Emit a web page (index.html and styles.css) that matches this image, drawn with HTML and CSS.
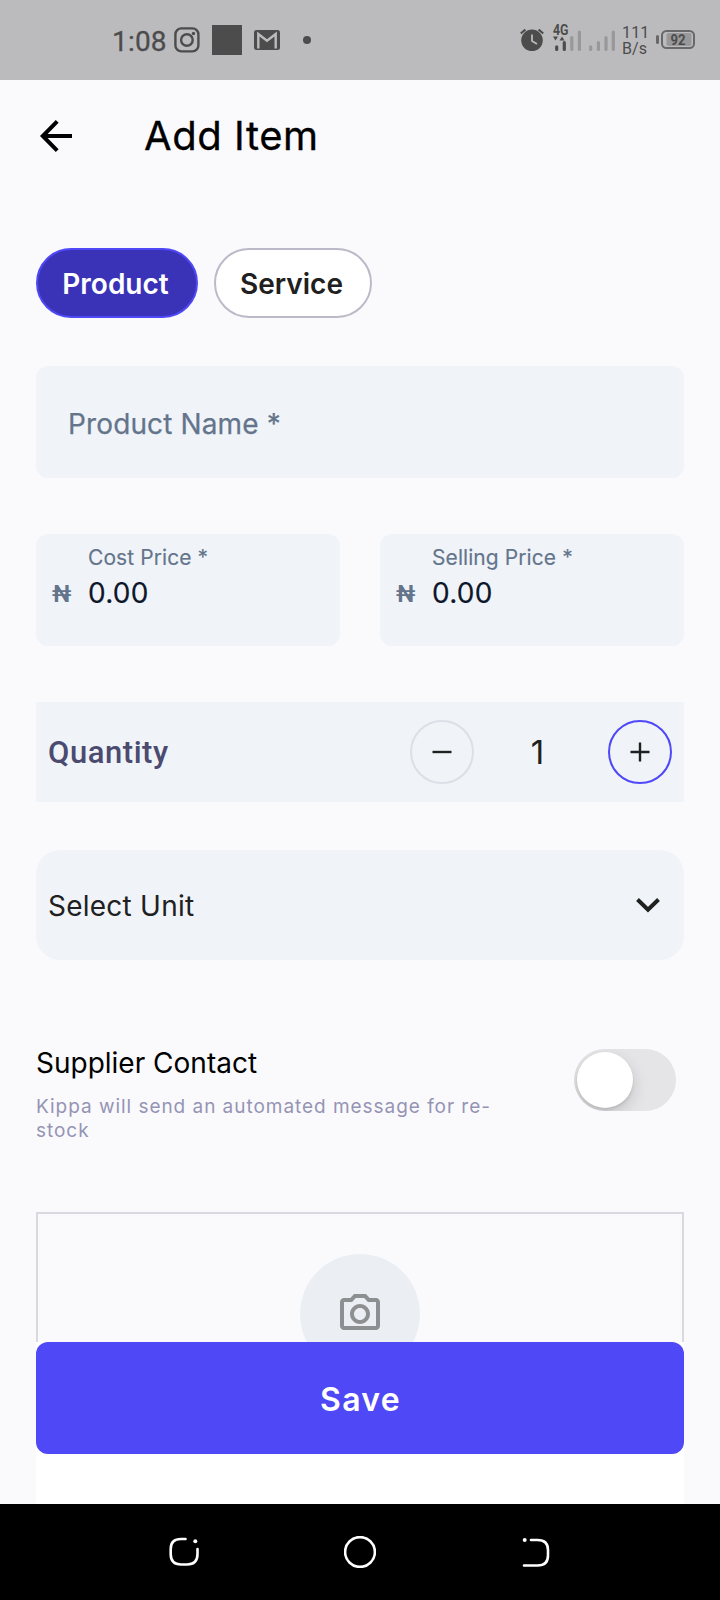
FILE: index.html
```html
<!DOCTYPE html>
<html lang="en">
<head>
<meta charset="utf-8">
<title>Add Item</title>
<link rel="stylesheet" href="styles.css">
</head>
<body>
<div class="screen">
  <div class="status">
    <span class="time">1:08</span>
    <svg class="notify" width="140" height="80" viewBox="172 0 140 80">
      <g fill="none" stroke="#4c4c4c" stroke-width="2.400"><rect x="175.400" y="28.400" width="23" height="23" rx="6"/><circle cx="186.900" cy="40" r="5.800"/></g>
      <circle cx="193.500" cy="33.500" r="1.700" fill="#4c4c4c"/>
      <rect x="212" y="25" width="30" height="30" fill="#4c4c4c"/>
      <rect x="254" y="30" width="26" height="20" rx="2.500" fill="#4c4c4c"/>
      <path d="M258.300 48.500V34L267 40.800L275.700 34V48.500" fill="none" stroke="#bbbbbd" stroke-width="2.400"/>
      <circle cx="307" cy="40" r="4" fill="#4c4c4c"/>
    </svg>
    <svg class="signals" width="98" height="80" viewBox="518 0 98 80">
      <circle cx="532" cy="40.300" r="10.800" fill="#4c4c4c"/>
      <g fill="none" stroke="#4c4c4c" stroke-width="2.200"><path d="M520.800 33.500L525.400 29.500M543.200 33.500L538.600 29.500"/></g>
      <path d="M532 34.500V41L537 44" fill="none" stroke="#bbbbbd" stroke-width="1.800"/>
      <text x="553" y="35" class="network" textLength="15.500" lengthAdjust="spacingAndGlyphs">4G</text>
      <path d="M553 36.500h5l-2.500 4zM559.500 40.500h5l-2.500-4z" fill="#4c4c4c"/>
      <g stroke-width="3.200" stroke-linecap="round" fill="none">
        <path stroke="#4c4c4c" d="M556.700 46.800V49.500M564.300 42.500V49.500"/>
        <path stroke="#98989a" d="M571.800 37.500V49.500M579.400 32V49.500M590.700 46.800V49.500M598.400 42.500V49.500M606 37.500V49.500M613.300 32V49.500"/>
      </g>
    </svg>
    <span class="speed">111<br>B/s</span>
    <svg class="battery" width="40" height="80" viewBox="656 0 40 80">
      <rect x="656" y="35" width="3" height="9" rx="1.500" fill="#68686a"/>
      <rect x="662" y="31" width="32" height="17" rx="4.500" fill="none" stroke="#68686a" stroke-width="2"/>
      <rect x="666.500" y="33" width="25" height="13" rx="2" fill="#98989a"/>
      <text x="670.500" y="45" class="charge" textLength="15" lengthAdjust="spacingAndGlyphs">92</text>
    </svg>
  </div>

  <header class="appbar">
    <svg width="48" height="48" viewBox="0 0 24 24"><path d="M20 12H5.200M12.600 4.700L5.400 12L12.600 19.300" fill="none" stroke="#000" stroke-width="2"/></svg>
    <h1 class="title">Add Item</h1>
  </header>

  <main class="form">
    <div class="chips">
      <button class="chip chip-on">Product</button>
      <button class="chip chip-off">Service</button>
    </div>
    <div class="field name"><span class="hint">Product Name *</span></div>
    <div class="prices">
      <div class="field price"><span class="naira">₦</span><div class="entry"><span class="label">Cost Price *</span><span class="amount">0.00</span></div></div>
      <div class="field price"><span class="naira">₦</span><div class="entry"><span class="label">Selling Price *</span><span class="amount">0.00</span></div></div>
    </div>
    <div class="quantity">
      <span class="quantity-label">Quantity</span>
      <button class="round minus"><svg width="20" height="20" viewBox="0 0 20 20"><path d="M.5 10H19.500"/></svg></button>
      <span class="count">1</span>
      <button class="round plus"><svg width="20" height="20" viewBox="0 0 20 20"><path d="M.5 10H19.500M10 .5V19.500"/></svg></button>
    </div>
    <div class="unit">
      <span class="unit-label">Select Unit</span>
      <svg width="24" height="16" viewBox="0 0 24 16"><path d="M1.500 1.500L12 11.800L22.500 1.500" fill="none" stroke="#202020" stroke-width="4"/></svg>
    </div>
    <div class="supplier">
      <div class="supplier-text">
        <span class="supplier-title">Supplier Contact</span>
        <span class="supplier-note">Kippa will send an automated message for re-<br>stock</span>
      </div>
      <div class="toggle"><div class="knob"></div></div>
    </div>
    <div class="photo">
      <div class="camera"><svg width="48" height="48" viewBox="0 0 24 24" fill="#8e8f91"><path d="M14.120 4l1.830 2H20v12H4V6h4.050l1.830-2h4.240M15 2H9L7.170 4H4c-1.100 0-2 .9-2 2v12c0 1.100.9 2 2 2h16c1.100 0 2-.9 2-2V6c0-1.100-.9-2-2-2h-3.170L15 2zm-3 7c1.650 0 3 1.350 3 3s-1.350 3-3 3-3-1.350-3-3 1.350-3 3-3m0-2c-2.760 0-5 2.240-5 5s2.240 5 5 5 5-2.240 5-5-2.240-5-5-5z"/></svg></div>
    </div>
    <div class="footer"><button class="save">Save</button></div>
  </main>

  <nav class="navbar">
    <svg width="32" height="32" viewBox="0 0 32 32"><path d="M17.500 3H13Q2.700 3 2.700 13V18Q2.700 28.500 13 28.500H19Q29.500 28.500 29.500 18V13"/><circle class="dot" cx="27.300" cy="5.200" r="2"/></svg>
    <svg width="32" height="32" viewBox="0 0 32 32"><circle cx="16" cy="16" r="14.900"/></svg>
    <svg width="32" height="32" viewBox="0 0 32 32"><path d="M11 4H17.500Q28 4 28 14V19.500Q28 29.500 17.500 29.500H4"/><circle class="dot" cx="4.700" cy="4" r="2"/></svg>
  </nav>
</div>
</body>
</html>
```
FILE: styles.css
```css
* { box-sizing: border-box; }
body { margin: 0; font-family: Inter, "Liberation Sans", sans-serif; }
button { font: inherit; padding: 0; }
svg { display: block; flex: none; }
span { white-space: nowrap; }
.screen { width: 720px; height: 1600px; display: flex; flex-direction: column; background: #fafafd; overflow: hidden; }

.status { height: 80px; flex: none; display: flex; align-items: center; background: #bbbbbd; color: #4c4c4c; padding-left: 112px; font-family: Roboto, sans-serif; }
.time { width: 60px; font-size: 28px; font-weight: 450; line-height: 32px; letter-spacing: 0.200px; padding-top: 3px; -webkit-text-stroke: 0.300px #4c4c4c; }
.signals { margin-left: 206px; }
.network { font: 700 14px Roboto, sans-serif; fill: #4c4c4c; }
.speed { width: 34px; margin-left: 6px; font-size: 16px; line-height: 16px; letter-spacing: 0.150px; padding-top: 1px; }
.charge { font: 700 15.500px Roboto, sans-serif; fill: #4c4c4c; }

.appbar { height: 112px; flex: none; display: flex; align-items: center; padding: 0 32px; gap: 64px; }
.title { margin: 0; font-size: 40px; line-height: 48px; font-weight: 400; letter-spacing: 0.550px; color: #000; -webkit-text-stroke: 0.300px #000; }

.form { flex: 1; display: flex; flex-direction: column; padding: 56px 36px 0; min-height: 0; }
.chips { display: flex; gap: 16px; }
.chip { height: 70px; border-radius: 35px; font-size: 28px; font-weight: 600; line-height: 34px; padding: 2px 3px 0 0; }
.chip-on { width: 162px; background: #3b33b7; border: 2px solid #4f48f6; color: #fff; }
.chip-off { width: 158px; background: #fff; border: 2px solid #bbbac8; color: #202020; }

.field { height: 112px; border-radius: 12px; background: #f0f4f9; color: #64748b; }
.name { margin-top: 48px; display: flex; align-items: center; padding: 3px 32px 0; }
.hint { font-size: 28px; line-height: 34px; letter-spacing: 0.130px; -webkit-text-stroke: 0.250px #64748b; }
.prices { margin-top: 56px; display: grid; grid-template-columns: 304px 304px; gap: 40px; }
.price { display: flex; padding: 11px 16px; gap: 16px; }
.naira { width: 20px; padding-top: 34px; font-family: Roboto, sans-serif; font-size: 24px; font-weight: 600; line-height: 30px; }
.entry { display: flex; flex-direction: column; }
.label { font-size: 21px; line-height: 26px; letter-spacing: 0.080px; -webkit-text-stroke: 0.150px #64748b; }
.amount { margin-top: 5px; font-size: 28px; line-height: 34px; letter-spacing: 0.250px; color: #0f172a; -webkit-text-stroke: 0.200px #0f172a; }

.quantity { height: 100px; flex: none; margin-top: 56px; padding: 0 12px; display: flex; align-items: center; background: #f0f4f9; }
.quantity-label { flex: 1; font-family: Roboto, sans-serif; font-size: 31px; line-height: 36px; letter-spacing: 0.550px; font-weight: 500; color: #4b4b70; padding-top: 1px; }
.round { width: 64px; height: 64px; border-radius: 50%; border: 2px solid #dcdfe6; background: none; display: flex; align-items: center; justify-content: center; }
.round path { fill: none; stroke: #202020; stroke-width: 2.400; }
.plus { border-color: #4f48f6; }
.count { width: 134px; font-size: 33px; line-height: 40px; text-align: center; font-weight: 400; color: #202020; padding: 0 7px 1px 0; }

.unit { height: 110px; flex: none; margin-top: 48px; border-radius: 24px; padding: 2px 24px 0 12px; display: flex; align-items: center; justify-content: space-between; background: #f0f4f9; }
.unit-label { font-size: 28px; line-height: 34px; letter-spacing: 0.240px; color: #202020; }

.supplier { margin-top: 86px; flex: none; height: 110px; display: flex; justify-content: space-between; padding-right: 8px; }
.supplier-text { display: flex; flex-direction: column; }
.supplier-title { font-size: 28px; line-height: 34px; color: #000; }
.supplier-note { margin-top: 15px; font-size: 19px; line-height: 24px; letter-spacing: 0.960px; color: #9594b4; }
.toggle { width: 102px; height: 62px; margin-top: 3px; border-radius: 31px; padding: 3px; background: #e5e5e7; overflow: hidden; }
.knob { width: 56px; height: 56px; border-radius: 50%; background: #fff; box-shadow: 0 6px 16px rgba(0,0,0,.15), 0 2px 3px rgba(0,0,0,.1); }

.photo { margin-top: 56px; height: 130px; flex: none; border: 2px solid #dad9e2; border-bottom: 0; overflow: hidden; display: flex; justify-content: center; padding-top: 40px; }
.camera { width: 120px; height: 120px; flex: none; border-radius: 50%; background: #ebeff4; display: flex; align-items: center; justify-content: center; }
.footer { flex: 1; background: #fff; }
.save { display: block; width: 648px; height: 112px; border: 0; border-radius: 12px; background: #4f48f6; color: #fff; font-size: 32px; font-weight: 600; letter-spacing: 1.300px; padding: 2px 0 0 1px; }

.navbar { height: 96px; flex: none; display: flex; align-items: center; justify-content: space-between; padding: 0 168px; background: #000; }
.navbar svg { fill: none; stroke: #fff; stroke-width: 2.600; stroke-linecap: round; }
.navbar .dot { fill: #fff; stroke: none; }
```
